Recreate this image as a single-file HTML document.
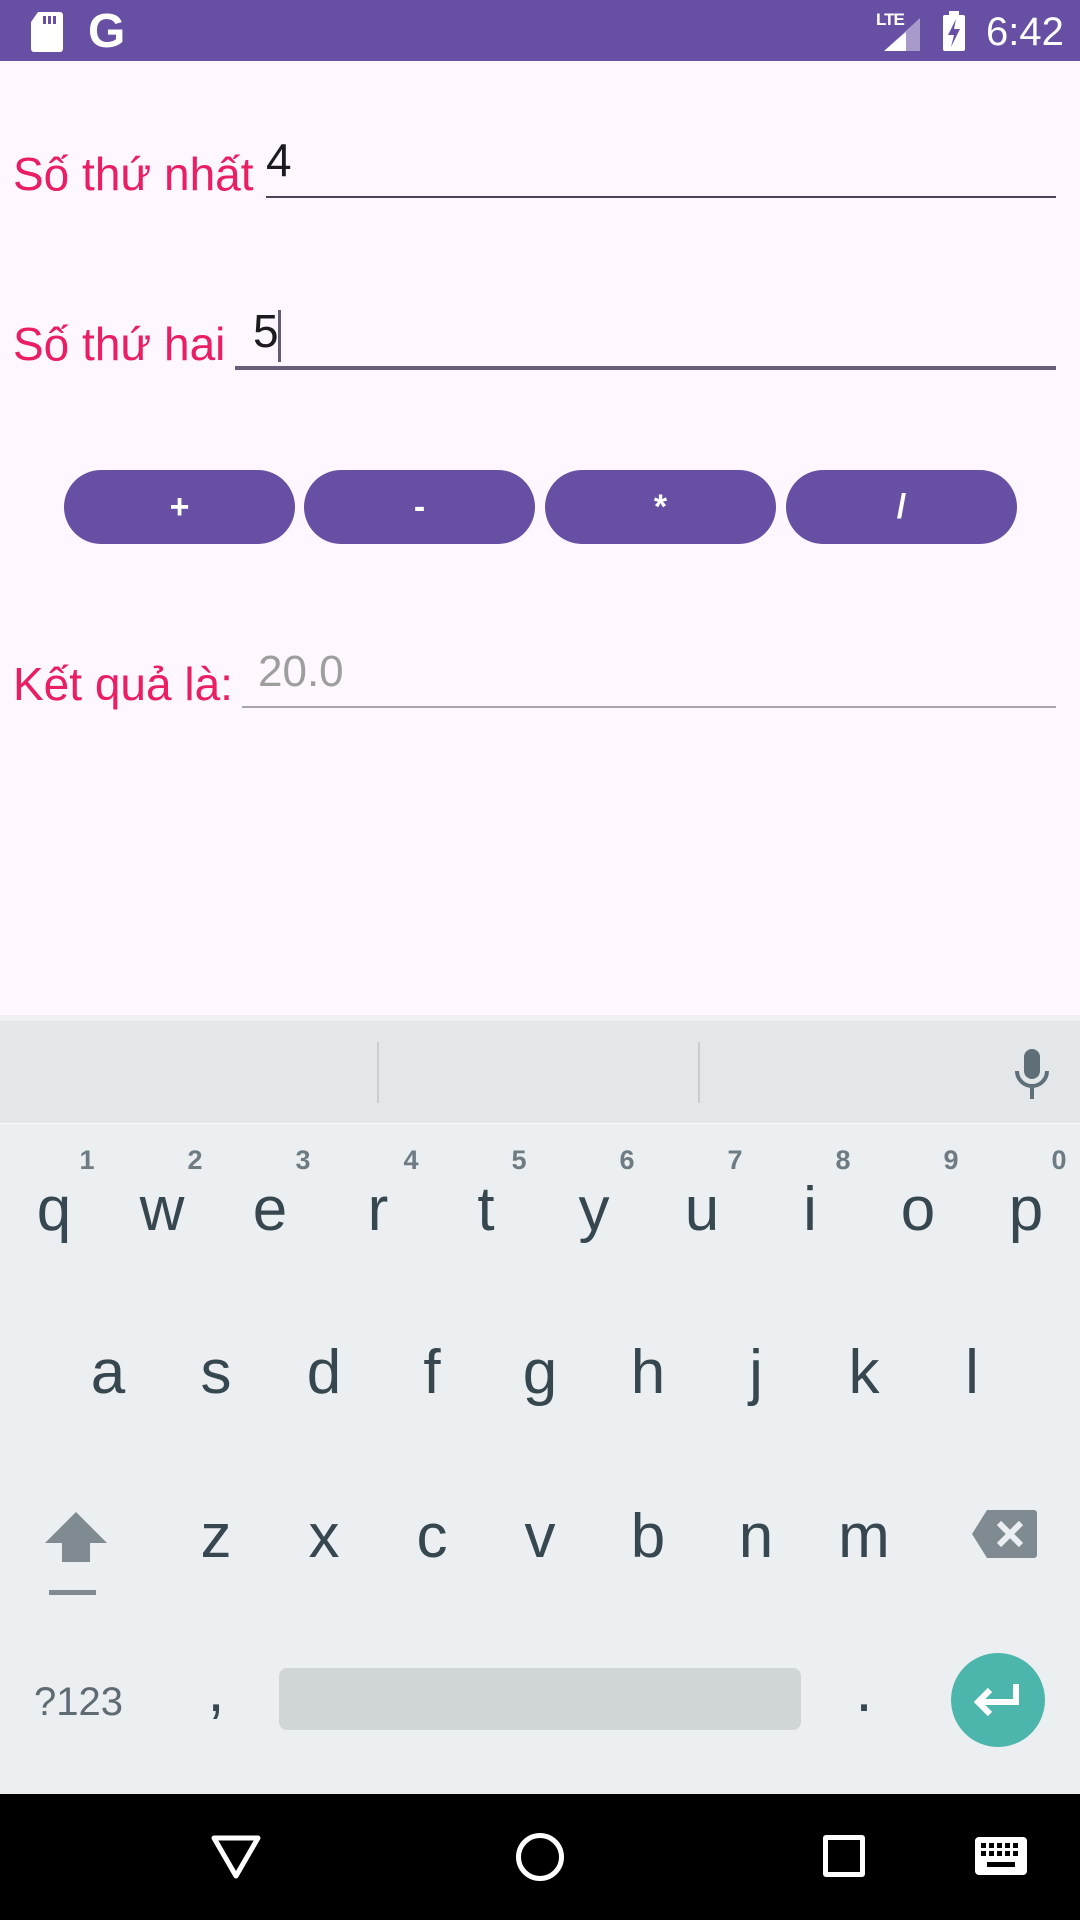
<!DOCTYPE html>
<html><head><meta charset="utf-8">
<style>
*{margin:0;padding:0;box-sizing:border-box}
body{width:1080px;height:1920px;position:relative;background:#FEF7FF;font-family:"Liberation Sans",sans-serif;overflow:hidden}
.a{position:absolute}
.lbl{color:#E91E63;font-size:46px;line-height:1}
.btn{position:absolute;top:470px;height:74px;width:231px;border-radius:37px;background:#6750A4;color:#fff;font-size:34px;font-weight:bold;text-align:center;line-height:74px}
.k{position:absolute;width:108px;text-align:center;color:#37474F;font-size:62px;line-height:1}
.d{position:absolute;width:40px;text-align:center;color:#6f7b82;font-size:27px;font-weight:bold;line-height:1}
</style></head><body>
<div class="a" style="left:0;top:0;width:1080px;height:61px;background:#6750A4"></div>
<svg class="a" style="left:30px;top:12px" width="34" height="40" viewBox="0 0 34 40"><path d="M8 0H30a3 3 0 0 1 3 3V37a3 3 0 0 1-3 3H4a3 3 0 0 1-3-3V10Z" fill="#fff"/><rect x="13" y="4" width="3" height="8" fill="#6750A4"/><rect x="18" y="4" width="3" height="8" fill="#6750A4"/><rect x="23" y="4" width="3" height="8" fill="#6750A4"/></svg>
<div class="a" style="left:88px;top:4px;color:#fff;font-size:48px;font-weight:bold">G</div>
<div class="a" style="left:876px;top:10px;color:#fff;font-size:17px;font-weight:bold;letter-spacing:-1px">LTE</div>
<svg class="a" style="left:884px;top:18px" width="38" height="33"><polygon points="36,0 36,33 0,33" fill="#A89BCB"/><polygon points="22,14 22,33 0,33 " fill="#fff"/></svg>
<svg class="a" style="left:942px;top:11px" width="26" height="40"><rect x="7" y="0" width="10" height="4" fill="#fff"/><rect x="1" y="4" width="22" height="36" rx="2" fill="#fff"/><path d="M14 8 L6 24 H12 L9 36 L18 18 H12 Z" fill="#6750A4"/></svg>
<div class="a" style="left:986px;top:10px;color:#fff;font-size:40px">6:42</div>

<div class="a lbl" style="left:13px;top:151px">Số thứ nhất</div>
<div class="a" style="left:266px;top:137px;font-size:46px;color:#1c1b1f;line-height:1">4</div>
<div class="a" style="left:266px;top:196px;width:790px;height:2px;background:#4a4458"></div>
<div class="a lbl" style="left:13px;top:321px">Số thứ hai</div>
<div class="a" style="left:253px;top:308px;font-size:46px;color:#1c1b1f;line-height:1">5</div>
<div class="a" style="left:278px;top:310px;width:3px;height:52px;background:#625b71"></div>
<div class="a" style="left:235px;top:366px;width:821px;height:4px;background:#675F7A"></div>
<div class="btn" style="left:64px">+</div>
<div class="btn" style="left:304px">-</div>
<div class="btn" style="left:545px">*</div>
<div class="btn" style="left:786px">/</div>
<div class="a lbl" style="left:13px;top:661px">Kết quả là:</div>
<div class="a" style="left:258px;top:650px;font-size:44px;color:#9E9E9E;line-height:1">20.0</div>
<div class="a" style="left:242px;top:706px;width:814px;height:2px;background:#a8a4ab"></div>

<div class="a" style="left:0;top:1015px;width:1080px;height:7px;background:#eef0f2"></div>
<div class="a" style="left:0;top:1021px;width:1080px;height:102px;background:#E3E7EA"></div>
<div class="a" style="left:377px;top:1042px;width:2px;height:61px;background:#c9cdd0"></div>
<div class="a" style="left:698px;top:1042px;width:2px;height:61px;background:#c9cdd0"></div>
<svg class="a" style="left:1012px;top:1047px" width="40" height="54" viewBox="0 0 40 54"><rect x="12" y="2" width="16" height="30" rx="8" fill="#5f6f78"/><path d="M5 24a15 15 0 0 0 30 0" stroke="#5f6f78" stroke-width="4" fill="none"/><rect x="18" y="38" width="4" height="14" fill="#5f6f78"/></svg>
<div class="a" style="left:0;top:1124px;width:1080px;height:670px;background:#ECEFF1"></div>

<div class="k" style="left:0;top:1179px">q</div>
<div class="k" style="left:108px;top:1179px">w</div>
<div class="k" style="left:216px;top:1179px">e</div>
<div class="k" style="left:324px;top:1179px">r</div>
<div class="k" style="left:432px;top:1179px">t</div>
<div class="k" style="left:540px;top:1179px">y</div>
<div class="k" style="left:648px;top:1179px">u</div>
<div class="k" style="left:756px;top:1179px">i</div>
<div class="k" style="left:864px;top:1179px">o</div>
<div class="k" style="left:972px;top:1179px">p</div>
<div class="d" style="left:67px;top:1147px">1</div>
<div class="d" style="left:175px;top:1147px">2</div>
<div class="d" style="left:283px;top:1147px">3</div>
<div class="d" style="left:391px;top:1147px">4</div>
<div class="d" style="left:499px;top:1147px">5</div>
<div class="d" style="left:607px;top:1147px">6</div>
<div class="d" style="left:715px;top:1147px">7</div>
<div class="d" style="left:823px;top:1147px">8</div>
<div class="d" style="left:931px;top:1147px">9</div>
<div class="d" style="left:1039px;top:1147px">0</div>

<div class="k" style="left:54px;top:1342px">a</div>
<div class="k" style="left:162px;top:1342px">s</div>
<div class="k" style="left:270px;top:1342px">d</div>
<div class="k" style="left:378px;top:1342px">f</div>
<div class="k" style="left:486px;top:1342px">g</div>
<div class="k" style="left:594px;top:1342px">h</div>
<div class="k" style="left:702px;top:1342px">j</div>
<div class="k" style="left:810px;top:1342px">k</div>
<div class="k" style="left:918px;top:1342px">l</div>

<svg class="a" style="left:44px;top:1510px" width="64" height="86"><polygon points="32,2 63,33 46,33 46,52 18,52 18,33 1,33" fill="#7f8b91"/><rect x="5" y="80" width="47" height="5" fill="#7f8b91"/></svg>
<div class="k" style="left:162px;top:1506px">z</div>
<div class="k" style="left:270px;top:1506px">x</div>
<div class="k" style="left:378px;top:1506px">c</div>
<div class="k" style="left:486px;top:1506px">v</div>
<div class="k" style="left:594px;top:1506px">b</div>
<div class="k" style="left:702px;top:1506px">n</div>
<div class="k" style="left:810px;top:1506px">m</div>
<svg class="a" style="left:972px;top:1510px" width="65" height="50"><path d="M15 0H62a3 3 0 0 1 3 3V45a3 3 0 0 1-3 3H15L0 24Z" fill="#7f8b91"/><path d="M27 13L49 35M49 13L27 35" stroke="#ECEFF1" stroke-width="6"/></svg>

<div class="a" style="left:34px;top:1680px;font-size:40px;color:#5f6b72">?123</div>
<div class="k" style="left:162px;top:1660px">,</div>
<div class="a" style="left:279px;top:1668px;width:522px;height:62px;border-radius:8px;background:#D0D5D8"></div>
<div class="k" style="left:810px;top:1660px">.</div>
<div class="a" style="left:951px;top:1653px;width:94px;height:94px;border-radius:50%;background:#4DB6AC"></div>
<svg class="a" style="left:970px;top:1680px" width="56" height="40"><path d="M46 4V22H10" stroke="#fff" stroke-width="6" fill="none"/><path d="M20 10L8 22L20 34" stroke="#fff" stroke-width="6" fill="none"/></svg>

<div class="a" style="left:0;top:1794px;width:1080px;height:126px;background:#000"></div>
<svg class="a" style="left:210px;top:1834px" width="52" height="46"><polygon points="4,4 48,4 26,42" stroke="#fff" stroke-width="5" fill="none" stroke-linejoin="round"/></svg>
<div class="a" style="left:516px;top:1833px;width:48px;height:48px;border:5px solid #fff;border-radius:50%"></div>
<div class="a" style="left:823px;top:1835px;width:42px;height:42px;border:5px solid #fff;border-radius:3px"></div>
<svg class="a" style="left:975px;top:1837px" width="52" height="38"><rect x="0" y="0" width="52" height="38" rx="4" fill="#fff"/><g fill="#000"><rect x="6" y="6" width="5" height="5"/><rect x="14" y="6" width="5" height="5"/><rect x="22" y="6" width="5" height="5"/><rect x="30" y="6" width="5" height="5"/><rect x="38" y="6" width="5" height="5"/><rect x="6" y="14" width="5" height="5"/><rect x="14" y="14" width="5" height="5"/><rect x="22" y="14" width="5" height="5"/><rect x="30" y="14" width="5" height="5"/><rect x="38" y="14" width="5" height="5"/><rect x="12" y="25" width="28" height="5"/></g></svg>
</body></html>
